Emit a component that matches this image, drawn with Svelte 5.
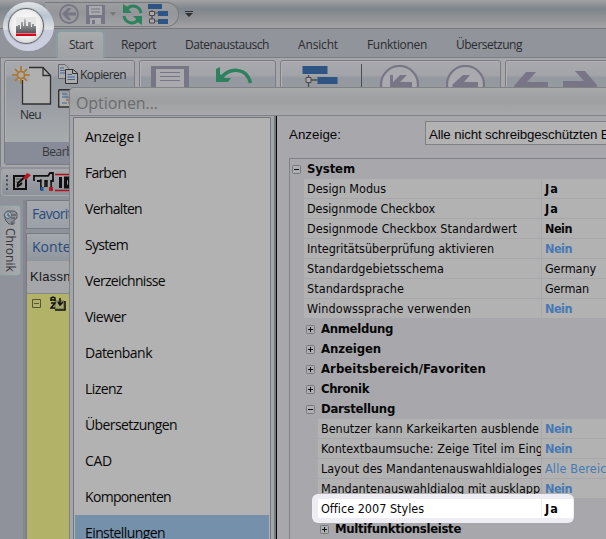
<script>
  const tabs = [
    { t: 'Start', x: 68, w: 24 },
    { t: 'Report', x: 121, w: 35 },
    { t: 'Datenaustausch', x: 185, w: 84 },
    { t: 'Ansicht', x: 298, w: 40 },
    { t: 'Funktionen', x: 367, w: 60 },
    { t: 'Übersetzung', x: 456, w: 66 }
  ];
  const pages = [
    ['Anzeige I', 56], ['Farben', 41], ['Verhalten', 57], ['System', 43],
    ['Verzeichnisse', 80], ['Viewer', 41], ['Datenbank', 67], ['Lizenz', 37],
    ['Übersetzungen', 92], ['CAD', 27], ['Komponenten', 86], ['Einstellungen', 80]
  ];
  const rows = [
    { k: 'cat', d: 0, t: 'System', w: 48, open: true },
    { k: 'row', d: 0, t: 'Design Modus', w: 79, v: 'Ja', vw: 14, b: true },
    { k: 'row', d: 0, t: 'Designmode Checkbox', w: 128, v: 'Ja', vw: 14, b: true },
    { k: 'row', d: 0, t: 'Designmode Checkbox Standardwert', w: 210, v: 'Nein', vw: 27, b: true },
    { k: 'row', d: 0, t: 'Integritätsüberprüfung aktivieren', w: 187, v: 'Nein', vw: 27, b: true, blue: true },
    { k: 'row', d: 0, t: 'Standardgebietsschema', w: 137, v: 'Germany', vw: 51 },
    { k: 'row', d: 0, t: 'Standardsprache', w: 97, v: 'German', vw: 44 },
    { k: 'row', d: 0, t: 'Windowssprache verwenden', w: 164, v: 'Nein', vw: 27, b: true, blue: true },
    { k: 'cat', d: 1, t: 'Anmeldung', w: 72 },
    { k: 'cat', d: 1, t: 'Anzeigen', w: 60 },
    { k: 'cat', d: 1, t: 'Arbeitsbereich/Favoriten', w: 165 },
    { k: 'cat', d: 1, t: 'Chronik', w: 48 },
    { k: 'cat', d: 1, t: 'Darstellung', w: 74, open: true },
    { k: 'row', d: 1, t: 'Benutzer kann Karkeikarten ausblende', w: 218, v: 'Nein', vw: 27, b: true, blue: true },
    { k: 'row', d: 1, t: 'Kontextbaumsuche: Zeige Titel im Eing', w: 222, v: 'Nein', vw: 27, b: true, blue: true },
    { k: 'row', d: 1, t: 'Layout des Mandantenauswahldialoges', w: 221, v: 'Alle Bereiche', vw: 76, blue: true },
    { k: 'row', d: 1, t: 'Mandantenauswahldialog mit ausklapp', w: 219, v: 'Nein', vw: 27, b: true, blue: true },
    { k: 'row', d: 1, t: 'Office 2007 Styles', w: 103, v: 'Ja', vw: 14, b: true, hot: true },
    { k: 'cat', d: 2, t: 'Multifunktionsleiste', w: 126 }
  ];

  // Spreads the letters of a label so that it takes the given width.
  function fit(node, width) {
    const now = node.getBoundingClientRect().width;
    node.style.letterSpacing = (width - now) / node.textContent.length + 'px';
  }
</script>

{#snippet diagram()}
  <path d="M6 9V25M6 14H15M6 25H15" fill="none" stroke="#4b4b4e" stroke-width="1.3" />
  <path d="M0 0H25V8H0zM15 11H35V18H15zM15 22H35V29H15z" fill="#2e5483" />
  <path d="M3.5 11.5H8.5V16.5H3.5zM3.5 22.5H8.5V27.5H3.5z" fill="#aaa" stroke="#4b4b4e" />
{/snippet}

{#snippet backCircle()}
  <circle cx="19.500" cy="19.500" r="18.500" fill="#a9a9ae" stroke="#787587" stroke-width="2.200" />
{/snippet}

<div class="app">
  <header class="titlebar">
    <div class="quick">
      <svg class="q1" width="22" height="22" viewBox="0 0 22 22">
        <circle cx="11" cy="11" r="9" fill="none" stroke="#787587" stroke-width="1.8" />
        <path d="M4 11L10 5H13.500L9.500 9.500H18V12.500H9.500L13.500 17H10z" fill="#787587" />
      </svg>
      <svg class="q2" width="19" height="19" viewBox="0 0 19 19">
        <path d="M0 0H19V19H0z" fill="#787587" />
        <path d="M3 1H16V10H3zM4 13H15V19H4z" fill="#a9a9ae" />
        <path d="M5 4H14M5 7H14" stroke="#787587" />
        <path d="M6 15H9V19H6z" fill="#787587" />
      </svg>
      <svg class="q3" width="6" height="4"><path d="M0 0H6L3 4z" fill="#77787c" /></svg>
      <svg class="q4" width="21" height="21" viewBox="0 0 21 21">
        <path d="M6 4A8 8 0 0 1 19 9M15 17A8 8 0 0 1 2 12" fill="none" stroke="#2e815e" stroke-width="3" />
        <path d="M1 0V9H10L7 6V4zM20 21V12H11L14 15V17z" fill="#2e815e" />
      </svg>
      <svg class="q5" width="20" height="20" viewBox="0 0 20 20">
        <path d="M4 6V17M4 9H10M4 17H10" fill="none" stroke="#4b4b4e" stroke-width="1.2" />
        <path d="M0 0H14V5H0zM10 7H20V12H10zM10 15H20V20H10z" fill="#2e5483" />
        <path d="M1.500 7.500H6.500V11.500H1.500zM1.500 15H6.500V19H1.500z" fill="#aaa" stroke="#4b4b4e" />
      </svg>
    </div>
    <svg class="more" width="8" height="6"><path d="M0 .5H8" stroke="#333" /><path d="M0 2H8L4 6z" fill="#333" /></svg>
  </header>

  <nav class="tabs">
    {#each tabs as tab, i}
      <span class="tab" class:active={i === 0} style:left="{tab.x}px"><span use:fit={tab.w}>{tab.t}</span></span>
    {/each}
  </nav>

  <section class="ribbon">
    <div class="group g1">
      <div class="new">
        <svg width="41" height="42" viewBox="0 0 41 42">
          <path d="M10.500 1.500H31L38.500 9.500V38H10.500z" fill="#b0b0b0" stroke="#303032" stroke-width="1.3" />
          <path d="M31 1.500V9.500H38.500" fill="none" stroke="#303032" stroke-width="1.3" />
          <path d="M5 -1H17V14H5z" fill="#a7a9ac" />
          <g stroke="#a9762d" stroke-width="1.600"><path d="M9 0V18M0 9H18M3 3L15 15M15 3L3 15" /><circle cx="9" cy="9" r="3.500" fill="#b0aaa0" /></g>
        </svg>
        <span use:fit={21}>Neu</span>
      </div>
      <div class="clip">
        <div class="copy">
          <svg width="20" height="20" viewBox="0 0 20 20">
            <path d="M.5.500H7L10.500 4V14.500H.5z" fill="#adadad" stroke="#66686c" />
            <path d="M2 4H6M2 6.500H7M2 9H7" stroke="#426596" />
            <path d="M7.500 5.500H15L19.500 9V19.500H7.500z" fill="#adadad" stroke="#303032" />
            <path d="M14.500 5.500V9.500H19" fill="none" stroke="#303032" /><path d="M9.500 10.500H14M9.500 13H17M9.500 15.500H17" stroke="#426596" />
          </svg>
          <span use:fit={46}>Kopieren</span>
        </div>
        <svg width="14" height="19"><path d="M.7.700H13M.7.700V18H14" fill="#adadad" stroke="#303032" stroke-width="1.4" /><path d="M4 5H9M4 8H11M4 14H9" stroke="#426596" /><path d="M8 11H13M10 14H13" stroke="#a8513a" /></svg>
      </div>
      <div class="caption"><span use:fit={57}>Bearbeiten</span></div>
    </div>
    <div class="group g2">
      <svg class="save" width="38" height="38"><path d="M0 0H38V38H0z" fill="#787587" /><path d="M5 3H33V21H5z" fill="#a9a9ae" /><path d="M9 6.500H29M9 10.500H29M9 14.500H29" stroke="#787587" /></svg>
      <svg class="undo" width="38" height="38"><path d="M5 13C13 3 30 1 34.500 18" fill="none" stroke="#2e815e" stroke-width="3.500" /><path d="M0 4L4 2V9L9 13H15L12 17H0z" fill="#2e815e" /></svg>
    </div>
    <div class="group g3">
      <svg class="tree" width="36" height="30" viewBox="0 0 35 30">{@render diagram()}</svg>
      <i></i>
      <svg class="c1" width="40" height="39">{@render backCircle()}<path d="M10 10H13V17L20 10H27L20 17H32V29H10z" fill="#787587" /></svg>
      <svg class="c2" width="40" height="39">{@render backCircle()}<path d="M6 20L17 10H24L18 17H32V24H8z" fill="#787587" /></svg>
    </div>
    <div class="group g4">
      <svg class="a1" width="34" height="30"><path d="M0 14L12 0H22L13 10H34V19H0z" fill="#787587" /></svg>
      <svg class="a2" width="34" height="30"><path d="M34 14L22 0H12L21 10H0V20H34z" fill="#787587" /></svg>
    </div>
  </section>

  <div class="toolbar">
    <svg width="67" height="24" viewBox="0 0 67 24">
      <path d="M2 4V19" stroke="#494c55" stroke-width="2" stroke-dasharray="2 2.300" />
      <path d="M9 5H21V18H9z" fill="#989898" stroke="#111" stroke-width="2" />
      <path d="M11 8H18M11 11H17M11 14H17" stroke="#555" /><path d="M13 16V12L21 5M12 16L17 12" fill="none" stroke="#111" stroke-width="2" /><path d="M18 7L22 2L26 4L21 9z" fill="#b51922" />
      <path d="M29 10V5H43L45 2H48V10H46V19M42 10V16M32 10H46M36 8V19M40 10V16" fill="none" stroke="#111" stroke-width="1.800" />
      <path d="M30 7H47M38 8V15M44 9V16" stroke="#9da1a2" stroke-width="2.500" />
      <path d="M37 16V20" stroke="#28589a" stroke-width="3" /><path d="M46 16V20" stroke="#b51922" stroke-width="4" />
      <path d="M50 3.500H67M50 19.500H67" stroke="#b0111a" stroke-width="1.500" /><path d="M55.500 6V17M60.500 7H63Q66.500 11.500 63 16H60.500z" fill="none" stroke="#111" stroke-width="3" />
    </svg>
  </div>

  <main class="work">
    <aside>
      <div class="chronik">
        <svg width="15" height="16" viewBox="0 0 15 16"><path d="M4 1H11L14 3V8L11 10V14H6L3 11L1 5z" fill="#8e9399" stroke="#55585e" /><circle cx="5" cy="5" r="3.500" fill="#a6b4bd" stroke="#4b6675" /><path d="M5 3V6H7M9 5H13M8 8H12M9 11V15" fill="none" stroke="#484b50" /></svg>
        <span>Chronik</span>
      </div>
    </aside>
    <div class="panels">
      <div class="fav"><span use:fit={55}>Favoriten</span></div>
      <div class="ctx">
        <div class="head"><span use:fit={51}>Kontext</span></div>
        <div class="filter"><span use:fit={67}>Klassname</span></div>
        <div class="yellow">
          <svg width="9" height="9"><path d="M.5.500H8.500V8.500H.5zM2 4.500H7" fill="none" stroke="#55553b" /></svg>
          <svg width="16" height="15" viewBox="0 0 16 15"><path d="M5 5H14V13H5z" fill="#a3a46e" stroke="#66683f" /><path d="M15 5V14H5" fill="none" stroke="#111" stroke-width="1.500" /><path d="M1 5V2L3 1L5 2V5M1 4H5M1 7H5L1 12H5M10 2V9M8 6L10 9L13 6" fill="none" stroke="#111" stroke-width="1.500" /></svg>
        </div>
      </div>
    </div>
  </main>

  <div class="halo"><div class="orb">
    <svg width="20" height="19" viewBox="0 0 20 19">
      <defs><linearGradient id="sky" x2="0" y2="1"><stop offset="0" stop-color="#c4c5c8" /><stop offset="1" stop-color="#55575b" /></linearGradient></defs>
      <path d="M0 0H20V17H0z" fill="#e6e6e7" />
      <path d="M0 16V9H2V8H4V12H5V5H7V9H8V3L9 1L10 3V9H12V5H15V10H16V7H18V9H20V16z" fill="url(#sky)" />
      <path d="M0 16.500H20V19H0z" fill="#df001b" />
    </svg>
  </div></div>

  <div class="dialog">
    <h1><span use:fit={82}>Optionen...</span></h1>
    <div class="body">
      <ul>
        {#each pages as [t, w], i}
          <li class:sel={i === 11}><span use:fit={w}>{t}</span></li>
        {/each}
      </ul>
      <div class="pane">
        <div class="show">
          <label for="show-select"><span use:fit={52}>Anzeige:</span></label>
          <div class="select" id="show-select"><span use:fit={205}>Alle nicht schreibgeschützten Eigen</span></div>
        </div>
        <div class="grid">
          {#each rows as r}
            {#if r.k === 'cat'}
              <div class="cat d{r.d}">
                <svg width="9" height="9"><rect x=".5" y=".5" width="8" height="8" rx="1" fill="#afafb1" stroke="#77797f" /><path d={r.open ? 'M2 4.500H7' : 'M2 4.500H7M4.500 2V7'} stroke="#111" /></svg>
                <b use:fit={r.w}>{r.t}</b>
              </div>
            {:else}
              <div class="row d{r.d}" class:hot={r.hot}>
                <div class="name"><span use:fit={r.w}>{r.t}</span></div>
                <div class="value" class:bold={r.b} class:blue={r.blue}><span use:fit={r.vw}>{r.v}</span></div>
              </div>
            {/if}
          {/each}
        </div>
      </div>
    </div>
  </div>
</div>

<style>
  :global(body) { margin: 0; }
  * { box-sizing: border-box; }
  svg { display: block; flex: none; }
  span, b { white-space: pre; display: inline-block; }
  .app { position: relative; width: 606px; height: 539px; overflow: hidden; background: #8f929a; color: #2b2c30; font: 12px 'Open Sans', sans-serif; display: flex; flex-direction: column; }
  .titlebar { flex: none; height: 29px; display: flex; align-items: center; border-bottom: 1px solid #75787e; background: linear-gradient(#a2a2a4 0, #96989b 3px, #898e94 6px, #7e868d 9px, #888c91 14px, #939497 20px, #a1a2a4 28px); }
  .quick { flex: none; width: 134px; height: 25px; margin-left: 45px; border: 1px solid #77797d; border-left: 0; border-radius: 0 13px 13px 0; background: linear-gradient(#9c9d9f, #949699 45%, #a1a2a4); display: flex; align-items: center; padding-left: 13px; }
  .q2 { margin-left: 6px; } .q3 { margin-left: 5px; } .q4 { margin-left: 6px; } .q5 { margin-left: 5px; }
  .more { margin-left: 6px; }
  .tabs { flex: none; position: relative; height: 29px; background: #91949b; border-bottom: 1px solid #7c7f85; }
  .tab { position: absolute; top: 2px; height: 27px; line-height: 27px; }
  .tab.active { padding: 0 11px; margin-left: -11px; border: 1px solid #83a0a2; border-bottom: 0; border-radius: 3px 3px 0 0; background: linear-gradient(#a9abad, #9fa1a5); box-shadow: 0 0 2px #96a8ab; line-height: 25px; width: 47px; }
  .ribbon { flex: none; height: 109px; display: flex; gap: 4px; padding: 2px 0 2px 3px; border-left: 1px solid #7c7f85; background: #a5a7ab; }
  .group { position: relative; flex: none; height: 105px; border: 1px solid #7b7d82; border-radius: 3px; box-shadow: inset 1px 1px #b0b1b4; background: linear-gradient(#a8aaad 0, #a2a4a9 14px, #94989f 17px, #989ca2 35px, #a8abad 80px); display: flex; }
  .g1 { width: 131px; } .g2 { width: 137px; } .g3 { width: 221px; } .g4 { width: 130px; }
  .new { display: flex; flex-direction: column; align-items: flex-start; padding: 5px 0 0 7px; width: 53px; }
  .new span { margin: -2px 0 0 8px; }
  .clip { padding-top: 3px; }
  .copy { display: flex; gap: 2px; height: 25px; line-height: 22px; }
  .caption { position: absolute; left: 0; right: 0; bottom: 0; height: 22px; line-height: 20px; padding-left: 37px; background: #888c98; font-size: 12px; color: #36383f; }
  .save { margin: 5px 0 0 11px; } .undo { margin: 4px 0 0 27px; }
  .tree { margin: 5px 0 0 21px; }
  .g3 i { width: 1px; height: 70px; margin: 3px 0 0 23px; background: #4c4e55; }
  .c1 { margin: 4px 0 0 18px; } .c2 { margin: 4px 0 0 26px; }
  .a1 { margin: 11px 0 0 8px; } .a2 { margin: 10px 0 0 15px; }
  .toolbar { flex: none; height: 27px; margin: 2px 0 0 1px; padding: 1px 0 0 3px; border: 1px solid #a5a7aa; border-radius: 3px; background: linear-gradient(#a7a9ad, #989ba2 45%, #8d9199); }
  .work { flex: 1; display: flex; padding-top: 4px; }
  aside { width: 26px; border-right: 3px solid #84878e; padding-top: 5px; }
  .chronik { width: 21px; height: 71px; border: 1px solid #869ea0; border-left: 0; border-radius: 0 4px 4px 0; background: linear-gradient(90deg, #9da0a5, #a8aaac); padding: 4px 3px; }
  .chronik span { writing-mode: vertical-rl; font-size: 12px; line-height: 15px; margin-top: 2px; color: #36373b; }
  .panels { width: 44px; display: flex; flex-direction: column; gap: 4px; white-space: nowrap; }
  .fav { height: 29px; line-height: 26px; font-size: 14px; color: #294b7c; padding-left: 5px; border: 1px solid #777b81; background: linear-gradient(#a5a9ae, #9ca0a8); }
  .ctx { flex: 1; border: 1px solid #777b81; }
  .head { height: 27px; line-height: 26px; font-size: 14px; color: #294b7c; padding-left: 5px; background: linear-gradient(#a3a8ae, #90969e); }
  .filter { height: 33px; line-height: 31px; padding-left: 3px; font-size: 13px; font-family: 'Liberation Sans', sans-serif; background: #a5a6a9; color: #161618; border-bottom: 1px solid #85888a; }
  .yellow { height: 260px; display: flex; gap: 9px; align-items: flex-start; padding: 5px 0 0 5px; background: #b2b268; }
  .yellow svg:last-child { margin-top: -3px; }
  .halo { position: absolute; left: 3px; top: 2px; width: 51px; height: 49px; border-radius: 50%; background: linear-gradient(#e4e6e9 0, #b9c5d0 28%, #dfe1e4 55%, #c8ccdc 58%, #ccd0df); padding: 6px 0 0 5px; }
  .orb { width: 36px; height: 36px; border-radius: 50%; border: 1px solid #63666b; background: radial-gradient(circle at 50% 45%, #fff, #eee 55%, #b4b4b6); box-shadow: 0 0 1px #555; display: flex; align-items: center; justify-content: center; }
  .dialog { position: absolute; left: 69px; top: 87px; width: 537px; height: 452px; border: 1px solid #808286; border-width: 1px 0 0 1px; border-radius: 5px 0 0 0; background: #a3a6aa; }
  h1 { margin: 0; height: 28px; padding-left: 6px; font: 16px/31px 'Open Sans', sans-serif; color: #6b6c6f; background: linear-gradient(#a9a9a9, #9d9fa1 45%, #a8a9ac); border-bottom: 1px solid #808286; border-radius: 5px 0 0 0; }
  .body { display: flex; height: 423px; padding: 1px 0 0 3px; }
  ul { list-style: none; margin: 0; padding: 1px 1px 0; width: 198px; height: 422px; flex: none; overflow: hidden; border: 1px solid #74777b; border-bottom: 0; background: #b2b2b2; color: #080808; font-size: 14px; }
  li { height: 36px; line-height: 35px; padding-left: 10px; }
  li.sel { background: #7590ab; }
  .pane { flex: 1; min-width: 0; margin: -1px 0 0 5px; padding: 5px 0 0 12px; overflow: hidden; border-left: 1px solid #050505; background: #a8a7ac; color: #070708; box-shadow: -2px 0 #75787c; }
  .show { height: 37px; display: flex; align-items: flex-start; font: 13.300px/26px 'Liberation Sans', sans-serif; }
  label { flex: none; width: 136px; line-height: 28px; }
  .select { width: 200px; flex: none; height: 24px; line-height: 25px; padding-left: 3px; border: 1px solid #7f8285; background: #b2b2b2; }
  .grid { border: 1px solid #7f8289; border-width: 1px 0 0 1px; font: 12px 'DejaVu Sans Condensed', 'DejaVu Sans', sans-serif; font-stretch: condensed; }
  .cat { height: 20px; line-height: 20px; display: flex; align-items: center; gap: 6px; padding-left: 2px; font-size: 13px; }
  .cat.d1 { padding-left: 16px; } .cat.d2 { padding-left: 30px; }
  .row { display: flex; height: 20px; line-height: 20px; padding-left: 14px; position: relative; font-size: 12.500px; }
  .row.d1 { padding-left: 28px; }
  .name { flex: none; height: 19px; padding-left: 3px; overflow: hidden; width: 237px; background: #b2b2b2; margin-right: 1px; position: relative; }
  .d1 .name { width: 223px; }
  .value { flex: 1; height: 19px; padding-left: 3px; white-space: nowrap; background: #b2b2b2; position: relative; }
  .bold { font-weight: bold; }
  .blue { color: #4579b4; }
  .hot::before { content: ''; position: absolute; left: 22px; top: -5px; width: 262px; height: 29px; border-radius: 6px; background: #eeedf3; }
  .hot .name { background: #fff; }
  .hot .value { background: linear-gradient(90deg, #fff 31px, transparent 31px); }
</style>
